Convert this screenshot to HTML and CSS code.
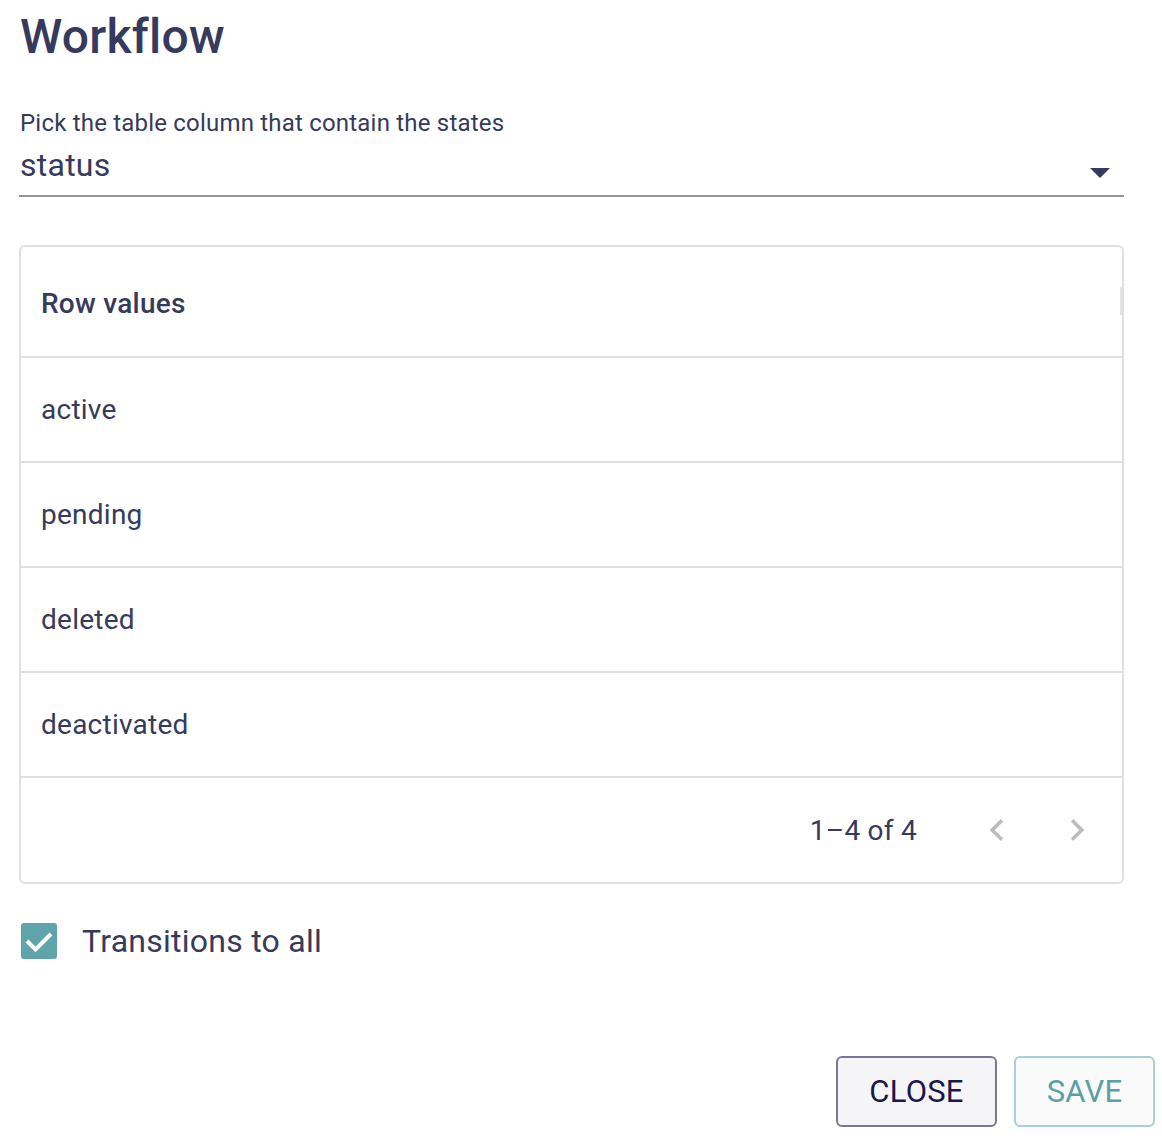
FILE: index.html
```html
<html lang="en">
<head>
    <meta charset="UTF-8">
    <meta name="viewport" content="width=device-width, initial-scale=1.0">
    <title>Workflow</title>
    <link rel="stylesheet" href="styles.css">
</head>
<body>

    <div class="dialog">
        <h1>Workflow</h1>

        <div class="field">
            <label class="field-label">Pick the table column that contain the states</label>
            <div class="select">
                <span class="select-value">status</span>
                <span class="select-arrow"></span>
            </div>
        </div>

        <div class="table-card">
            <div class="table-head">
                Row values
                <span class="scroll-thumb"></span>
            </div>
            <div class="table-row">active</div>
            <div class="table-row">pending</div>
            <div class="table-row">deleted</div>
            <div class="table-row">deactivated</div>
            <div class="table-footer">
                <span class="page-info">1–4 of 4</span>
                <button class="page-btn" disabled>
                    <svg viewBox="0 0 24 24" width="44" height="44"><path d="M15.41 7.41L14 6l-6 6 6 6 1.41-1.41L10.83 12z"/></svg>
                </button>
                <button class="page-btn" disabled>
                    <svg viewBox="0 0 24 24" width="44" height="44"><path d="M10 6L8.59 7.41 13.17 12l-4.58 4.59L10 18l6-6z"/></svg>
                </button>
            </div>
        </div>

        <label class="checkbox">
            <span class="checkbox-box">
                <svg viewBox="0 0 36 36" width="36" height="36"><polyline points="6,18 14.5,26.5 30,11" /></svg>
            </span>
            Transitions to all
        </label>
    </div>

    <div class="actions">
        <button class="btn btn-close">CLOSE</button>
        <button class="btn btn-save">SAVE</button>
    </div>

</body>
</html>
```

FILE: styles.css
```css
* {
    margin: 0;
    padding: 0;
    box-sizing: border-box;
    font-family: Roboto, 'Liberation Sans', sans-serif;
}

body {
    background: #ffffff;
    color: #363a5c;
    letter-spacing: 0.25px;
}

.dialog {
    width: 1124px;
    padding-left: 19px;
}

h1 {
    font-size: 48px;
    font-weight: 500;
    line-height: 56px;
    padding-top: 9px;
    padding-left: 1px;
}

/* Column select */
.field {
    margin-top: 44px;
}

.field-label {
    display: block;
    font-size: 24px;
    line-height: 28px;
    letter-spacing: 0.2px;
    padding-left: 1px;
}

.select {
    display: flex;
    align-items: flex-start;
    justify-content: space-between;
    margin-top: 9px;
    padding-bottom: 11px;
    border-bottom: 2px solid #949494;
}

.select-value {
    font-size: 32px;
    line-height: 38px;
    padding-left: 1px;
}

.select-arrow {
    width: 0;
    height: 0;
    margin-top: 22px;
    margin-right: 14px;
    border-left: 10px solid transparent;
    border-right: 10px solid transparent;
    border-top: 10px solid #363a5c;
}

/* Row values table */
.table-card {
    margin-top: 48px;
    border: 2px solid #e0e0e0;
    border-radius: 6px;
}

.table-head {
    position: relative;
    display: flex;
    align-items: center;
    height: 109px;
    padding-left: 20px;
    padding-top: 4px;
    font-size: 28px;
    font-weight: 500;
}

.scroll-thumb {
    position: absolute;
    right: -1px;
    top: 40px;
    width: 3px;
    height: 28px;
    background: #e2e2e2;
}

.table-row {
    display: flex;
    align-items: center;
    height: 105px;
    padding-left: 20px;
    border-top: 2px solid #e0e0e0;
    font-size: 28px;
}

.table-footer {
    display: flex;
    align-items: center;
    justify-content: flex-end;
    height: 106px;
    padding-right: 23px;
    border-top: 2px solid #e0e0e0;
}

.page-info {
    font-size: 28px;
    margin-right: 58px;
}

.page-btn {
    display: flex;
    background: none;
    border: none;
    fill: #bdbdbd;
}

.page-btn + .page-btn {
    margin-left: 36px;
}

/* Checkbox */
.checkbox {
    display: flex;
    align-items: center;
    gap: 25px;
    margin-top: 38px;
    padding-left: 2px;
    font-size: 32px;
}

.checkbox-box {
    display: flex;
    width: 36px;
    height: 36px;
    border-radius: 3px;
    background: #5fa3ab;
}

.checkbox-box polyline {
    fill: none;
    stroke: #ffffff;
    stroke-width: 4;
}

/* Dialog actions */
.actions {
    display: flex;
    justify-content: flex-end;
    gap: 17px;
    width: 1155px;
    margin-top: 96px;
}

.btn {
    height: 71px;
    border-radius: 6px;
    font-size: 31px;
    letter-spacing: 0.25px;
    background: #f5f5f7;
    cursor: pointer;
}

.btn-close {
    width: 161px;
    border: 2px solid #7d7599;
    color: #1c1650;
}

.btn-save {
    width: 141px;
    border: 2px solid #a9d0d6;
    background: #fafafa;
    color: #5a9fa9;
}
```
